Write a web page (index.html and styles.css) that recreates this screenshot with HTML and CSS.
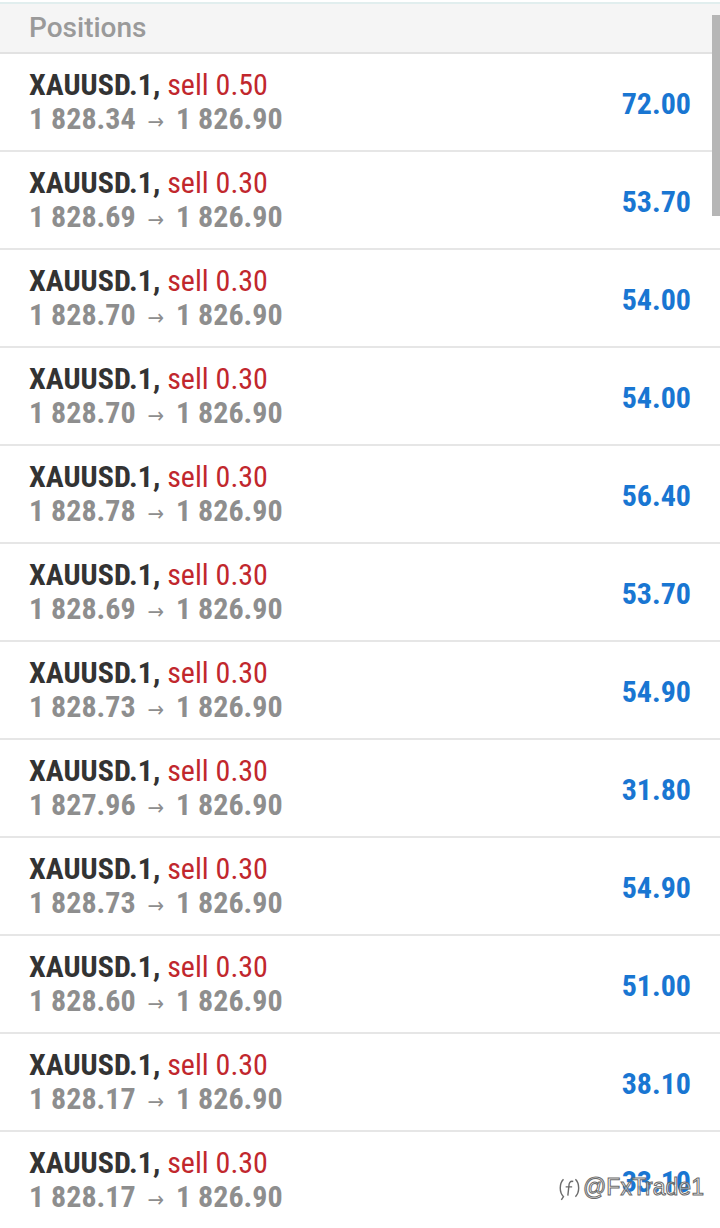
FILE: index.html
```html
<!DOCTYPE html>
<html lang="en">
<head>
    <meta charset="UTF-8">
    <meta name="viewport" content="width=device-width, initial-scale=1.0">
    <title>Positions</title>
    <link rel="stylesheet" href="styles.css">
</head>
<body>
    <div class="top-line"></div>
    <div class="header">Positions</div>
    <div class="list">
        <div class="row">
            <div class="info">
                <div class="title"><b>XAUUSD.1,</b> <span class="sell">sell 0.50</span></div>
                <div class="prices">1 828.34 <span class="arrow">&rarr;</span> 1 826.90</div>
            </div>
            <div class="profit">72.00</div>
        </div>
        <div class="row">
            <div class="info">
                <div class="title"><b>XAUUSD.1,</b> <span class="sell">sell 0.30</span></div>
                <div class="prices">1 828.69 <span class="arrow">&rarr;</span> 1 826.90</div>
            </div>
            <div class="profit">53.70</div>
        </div>
        <div class="row">
            <div class="info">
                <div class="title"><b>XAUUSD.1,</b> <span class="sell">sell 0.30</span></div>
                <div class="prices">1 828.70 <span class="arrow">&rarr;</span> 1 826.90</div>
            </div>
            <div class="profit">54.00</div>
        </div>
        <div class="row">
            <div class="info">
                <div class="title"><b>XAUUSD.1,</b> <span class="sell">sell 0.30</span></div>
                <div class="prices">1 828.70 <span class="arrow">&rarr;</span> 1 826.90</div>
            </div>
            <div class="profit">54.00</div>
        </div>
        <div class="row">
            <div class="info">
                <div class="title"><b>XAUUSD.1,</b> <span class="sell">sell 0.30</span></div>
                <div class="prices">1 828.78 <span class="arrow">&rarr;</span> 1 826.90</div>
            </div>
            <div class="profit">56.40</div>
        </div>
        <div class="row">
            <div class="info">
                <div class="title"><b>XAUUSD.1,</b> <span class="sell">sell 0.30</span></div>
                <div class="prices">1 828.69 <span class="arrow">&rarr;</span> 1 826.90</div>
            </div>
            <div class="profit">53.70</div>
        </div>
        <div class="row">
            <div class="info">
                <div class="title"><b>XAUUSD.1,</b> <span class="sell">sell 0.30</span></div>
                <div class="prices">1 828.73 <span class="arrow">&rarr;</span> 1 826.90</div>
            </div>
            <div class="profit">54.90</div>
        </div>
        <div class="row">
            <div class="info">
                <div class="title"><b>XAUUSD.1,</b> <span class="sell">sell 0.30</span></div>
                <div class="prices">1 827.96 <span class="arrow">&rarr;</span> 1 826.90</div>
            </div>
            <div class="profit">31.80</div>
        </div>
        <div class="row">
            <div class="info">
                <div class="title"><b>XAUUSD.1,</b> <span class="sell">sell 0.30</span></div>
                <div class="prices">1 828.73 <span class="arrow">&rarr;</span> 1 826.90</div>
            </div>
            <div class="profit">54.90</div>
        </div>
        <div class="row">
            <div class="info">
                <div class="title"><b>XAUUSD.1,</b> <span class="sell">sell 0.30</span></div>
                <div class="prices">1 828.60 <span class="arrow">&rarr;</span> 1 826.90</div>
            </div>
            <div class="profit">51.00</div>
        </div>
        <div class="row">
            <div class="info">
                <div class="title"><b>XAUUSD.1,</b> <span class="sell">sell 0.30</span></div>
                <div class="prices">1 828.17 <span class="arrow">&rarr;</span> 1 826.90</div>
            </div>
            <div class="profit">38.10</div>
        </div>
        <div class="row">
            <div class="info">
                <div class="title"><b>XAUUSD.1,</b> <span class="sell">sell 0.30</span></div>
                <div class="prices">1 828.17 <span class="arrow">&rarr;</span> 1 826.90</div>
            </div>
            <div class="profit">33.10</div>
        </div>
    </div>
    <div class="scrollbar"></div>
    <div class="watermark">
        <svg class="wm-logo" viewBox="0 0 24 24">
            <path d="M6 4 C2 8 2 16 6 20 L4 23" />
            <path d="M17 4 C21 8 21 16 17 20" />
            <path d="M15 6 C12 5 11 8 11 10 L10 19 M8 11 L14 11" />
        </svg>
        <span>@FxTrade1</span>
    </div>
</body>
</html>
```

FILE: styles.css
```css
body {
    margin: 0px;
    background-color: #fff;
    font-family: Roboto, sans-serif;
    font-stretch: condensed;
    overflow: hidden;
}

.top-line {
    height: 2px;
    margin-top: 2px;
    background-color: #e1eeee;
}

.header {
    height: 50px;
    box-sizing: border-box;
    padding: 7px 29px 0px;
    background-color: #f5f5f5;
    border-bottom: 2px solid #e2e2e2;
    font-size: 28px;
    font-weight: 500;
    font-stretch: normal;
    color: #9a9a9a;
}

.row {
    display: flex;
    align-items: center;
    justify-content: space-between;
    height: 98px;
    box-sizing: border-box;
    padding: 2px 29px 0px;
    border-bottom: 2px solid #e6e6e6;
}

.title {
    font-size: 30px;
    line-height: 34px;
    color: #333;
}

.title b {
    font-weight: 700;
}

.sell {
    color: #c1272d;
}

.prices {
    font-size: 30px;
    line-height: 34px;
    font-weight: 700;
    color: #8e8e8e;
}

.arrow {
    font-family: "DejaVu Sans", sans-serif;
    font-weight: 400;
    font-size: 22px;
    padding: 0px 5px;
}

.profit {
    font-size: 30px;
    font-weight: 700;
    color: #1976d2;
}

.scrollbar {
    position: absolute;
    top: 15px;
    right: 0px;
    width: 8px;
    height: 201px;
    background-color: #b6b6b6;
}

.watermark {
    position: absolute;
    left: 557px;
    top: 1174px;
    display: flex;
    align-items: center;
    font-family: "Liberation Sans", Arial, sans-serif;
    font-stretch: normal;
    font-size: 23px;
    color: rgba(255, 255, 255, 0.6);
    -webkit-text-stroke: 1px #6b6b6b;
}

.wm-logo {
    width: 26px;
    height: 26px;
    fill: none;
    stroke: #6b6b6b;
    stroke-width: 1.3;
}
```
